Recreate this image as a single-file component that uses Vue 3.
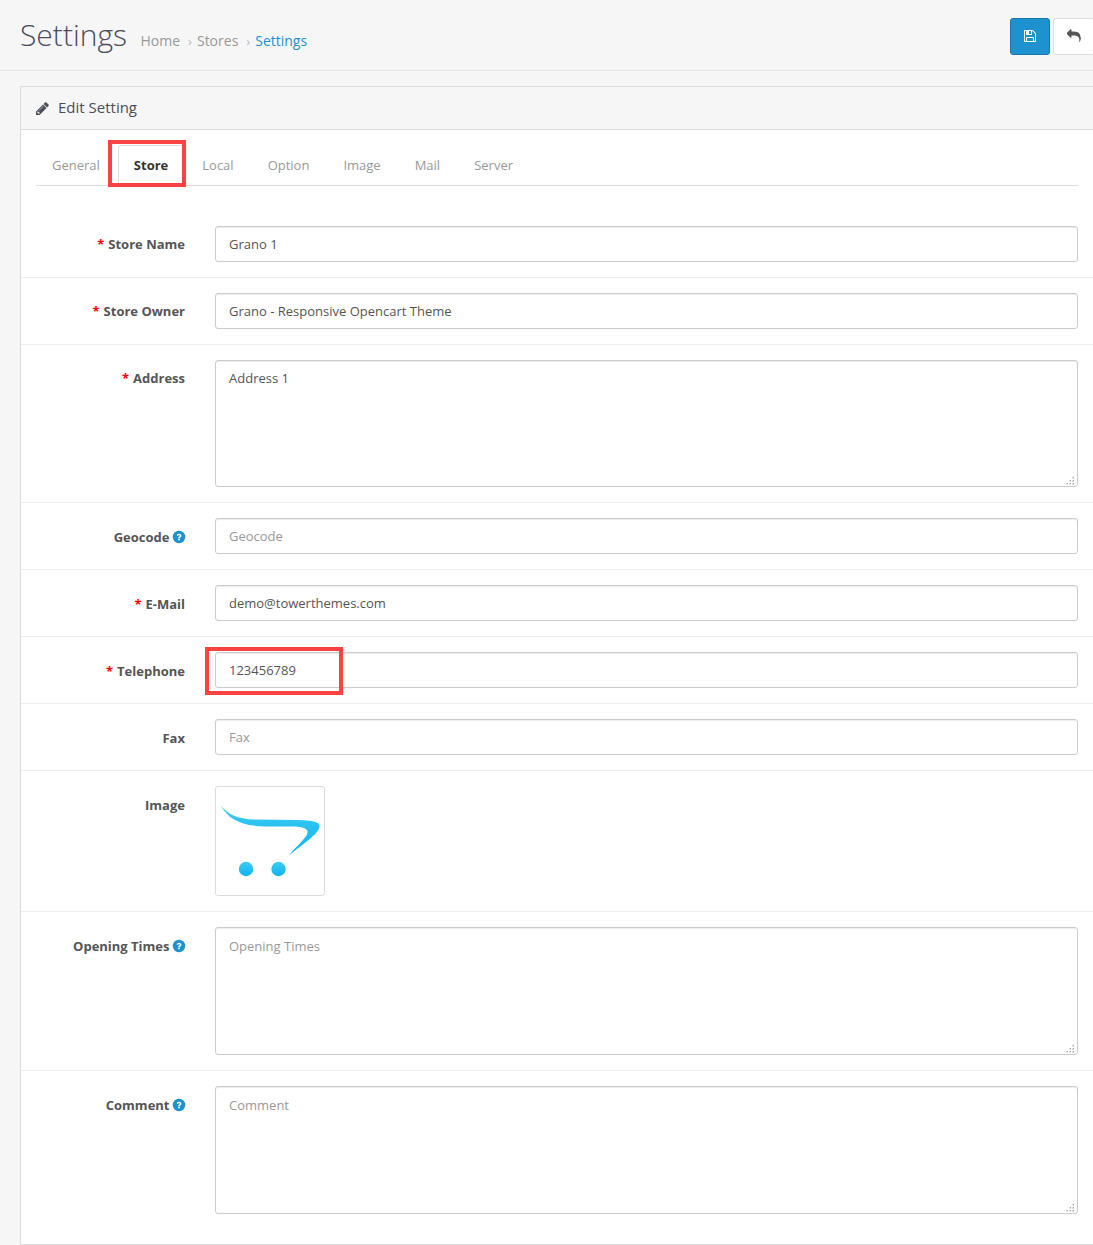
<script setup>
const tabs = ['General', 'Store', 'Local', 'Option', 'Image', 'Mail', 'Server']
const rows = [
  { label: 'Store Name', required: true, type: 'input', value: 'Grano 1' },
  { label: 'Store Owner', required: true, type: 'input', value: 'Grano - Responsive Opencart Theme' },
  { label: 'Address', required: true, type: 'textarea', value: 'Address 1', height: 127 },
  { label: 'Geocode', help: true, type: 'input', value: '', low: true },
  { label: 'E-Mail', required: true, type: 'input', value: 'demo@towerthemes.com', low: true },
  { label: 'Telephone', required: true, type: 'input', value: '123456789', marked: true, low: true },
  { label: 'Fax', type: 'input', value: '', low: true },
  { label: 'Image', type: 'image', low: true },
  { label: 'Opening Times', help: true, type: 'textarea', value: '', height: 128, low: true },
  { label: 'Comment', help: true, type: 'textarea', value: '', height: 128, low: true },
]
</script>

<template>
  <div class="page">
    <header class="page-header">
      <h1>Settings</h1>
      <nav class="breadcrumb">
        <a>Home</a><span class="sep">›</span><a>Stores</a><span class="sep">›</span><a class="current">Settings</a>
      </nav>
      <div class="actions">
        <button class="btn primary" aria-label="Save">
          <svg width="14" height="14" viewBox="0 0 1792 1792"><path transform="translate(128 0)" d="M384 1536h768v-384h-768v384zM1280 1536h128v-896q0-14-10-38.500t-20-34.500l-281-281q-10-10-34-20t-39-10v416q0 40-28 68t-68 28h-576q-40 0-68-28t-28-68v-416h-128v1280h128v-416q0-40 28-68t68-28h832q40 0 68 28t28 68v416zM896 608v-320q0-13-9.500-22.500t-22.500-9.500h-192q-13 0-22.500 9.500t-9.500 22.500v320q0 13 9.500 22.500t22.500 9.500h192q13 0 22.500-9.500t9.500-22.500zM1536 640v928q0 40-28 68t-68 28h-1344q-40 0-68-28t-28-68v-1344q0-40 28-68t68-28h928q40 0 88 20t76 48l280 280q28 28 48 76t20 88z" /></svg>
        </button>
        <button class="btn back" aria-label="Back">
          <svg width="14" height="14" viewBox="0 0 1792 1792"><path d="M1792 1120q0 166-127 451-3 7-10.500 24t-13.500 30-13 22q-12 17-28 17-15 0-23.500-10t-8.500-25q0-9 2.500-26.500t2.500-23.500q5-68 5-123 0-112-19.500-200.500t-54-153.500-89-112-117-78-146.500-47.500-168.500-24.500-192-7h-224v256q0 26-19 45t-45 19-45-19l-512-512q-19-19-19-45t19-45l512-512q19-19 45-19t45 19 19 45v256h224q713 0 875 403 53 134 53 333z" /></svg>
        </button>
      </div>
    </header>

    <section class="panel">
      <div class="panel-heading">
        <svg width="15" height="15" viewBox="0 0 1792 1792"><path d="M491 1536l91-91-235-235-91 91v107h128v128h107zm523-928q0-22-22-22-10 0-17 7l-542 542q-7 7-7 17 0 22 22 22 10 0 17-7l542-542q7-7 7-17zm-54-192l416 416-832 832h-416v-416zm683 96q0 53-37 90l-166 166-416-416 166-165q36-38 90-38 53 0 91 38l235 234q37 39 37 91z" /></svg>
        <h3>Edit Setting</h3>
      </div>

      <ul class="tabs">
        <li v-for="tab in tabs" :key="tab" :class="{ active: tab === 'Store' }">
          {{ tab }}
          <span v-if="tab === 'Store'" class="mark"></span>
        </li>
      </ul>

      <form class="form">
        <div v-for="row in rows" :key="row.label" class="row" :class="{ low: row.low }">
          <label>
            <span v-if="row.required" class="star">*</span>{{ row.label }}
            <svg v-if="row.help" class="help" width="14" height="14" viewBox="0 0 1792 1792">
              <circle cx="896" cy="896" r="800" />
              <path class="glyph" transform="translate(170 145) scale(0.81 0.84)" d="M1024 1376v-192q0-14-9-23t-23-9h-192q-14 0-23 9t-9 23v192q0 14 9 23t23 9h192q14 0 23-9t9-23zm256-672q0-88-55.500-163t-138.500-116-170-41q-243 0-371 213-15 24 8 42l132 100q7 6 19 6 16 0 25-12 53-68 86-92 34-24 86-24 48 0 85.500 26t37.500 59q0 38-20 61t-68 45q-63 28-115.500 86.500t-52.500 125.500v36q0 14 9 23t23 9h192q14 0 23-9t9-23q0-19 21.500-49.500t54.500-49.500q32-18 49-28.500t46-35 44.500-48 28-60.500 12.500-81z" />
            </svg>
          </label>
          <div class="field">
            <input v-if="row.type === 'input'" type="text" :value="row.value" :placeholder="row.label" />
            <template v-else-if="row.type === 'textarea'">
              <textarea :value="row.value" :placeholder="row.label" :style="{ height: row.height + 'px' }"></textarea>
              <svg class="grip" width="8" height="8" viewBox="0 0 8 8"><path d="M6 0h2v2h-2zM3 3h2v2h-2zM6 3h2v2h-2zM0 6h2v2h-2zM3 6h2v2h-2zM6 6h2v2h-2z" /><path class="dot" d="M7 0h1v1h-1zM4 3h1v1h-1zM7 3h1v1h-1zM1 6h1v1h-1zM4 6h1v1h-1zM7 6h1v1h-1z" /></svg>
            </template>
            <div v-else class="thumb">
              <svg width="100" height="100" viewBox="0 0 100 100">
                <defs>
                  <linearGradient id="swoosh" x1="0" y1="0" x2="0" y2="1">
                    <stop offset="0" stop-color="#3fcbf2" />
                    <stop offset="1" stop-color="#0cb5f0" />
                  </linearGradient>
                </defs>
                <g fill="url(#swoosh)">
                  <path d="M0.300 14C7.500 23 17 28.200 34 28.500L78 29C91 29.200 99.500 30.500 99.500 35C99.500 42.500 84 52 69 64.500C75 56 87.500 47 87.500 41C87.500 37 81 35.800 72 35.600L46 35.400C20 35 8.500 28 0.300 14Z" />
                  <circle cx="26" cy="78" r="7.200" />
                  <circle cx="58.500" cy="78" r="7.200" />
                </g>
              </svg>
            </div>
            <span v-if="row.marked" class="mark"></span>
          </div>
        </div>
      </form>
    </section>
  </div>
</template>

<style>
body {
  margin: 0;
  background: #f6f6f6;
  overflow: hidden;
}
</style>

<style scoped>
.page {
  box-sizing: border-box;
  width: 1115px;
  height: 1245px;
  overflow: hidden;
  font: 13px/20px "Open Sans", sans-serif;
  color: #555;
  background: #f6f6f6;
}
.page-header {
  box-sizing: border-box;
  height: 71px;
  padding: 0 20px;
  border-bottom: 1px solid #e7e7e7;
  display: flex;
  align-items: flex-start;
}
h1 {
  margin: 15px 0 0;
  font-size: 30px;
  line-height: 40px;
  font-weight: 300;
  color: #4c4d5a;
}
.breadcrumb {
  margin: 31px 0 0 13.500px;
  font-size: 14px;
  color: #999;
  white-space: nowrap;
}
.breadcrumb .sep {
  color: #bbb;
  font-size: 13px;
  margin: 0 5px 0 8px;
}
.breadcrumb .current {
  color: #1e91cf;
}
.actions {
  margin: 18px 0 0 auto;
  display: flex;
  gap: 3px;
}
.btn {
  box-sizing: border-box;
  width: 40px;
  height: 37px;
  padding: 0 0 1px;
  display: flex;
  align-items: center;
  justify-content: center;
  border: 1px solid #ddd;
  border-radius: 3px;
  background: #fff;
  color: #555;
}
.btn.primary {
  background: #1e91cf;
  border-color: #1978ab;
  color: #fff;
}
.btn.back {
  width: 42px;
}
svg {
  fill: currentColor;
}
.panel {
  box-sizing: border-box;
  width: 1075px;
  height: 1159px;
  margin: 15px 0 0 20px;
  border: 1px solid #dcdcdc;
  background: #fff;
}
.panel-heading {
  height: 42px;
  padding: 0 14px;
  display: flex;
  align-items: center;
  border-bottom: 1px solid #dcdcdc;
  background: #f6f6f6;
  color: #4c4d5a;
}
h3 {
  margin: 0 0 2px 8px;
  font-size: 15px;
  font-weight: 400;
}
.tabs {
  list-style: none;
  margin: 15px 0 25px 15px;
  padding: 0;
  width: 1042px;
  height: 40px;
  display: flex;
  gap: 2px;
  border-bottom: 1px solid #ddd;
}
.tabs li {
  position: relative;
  height: 40px;
  padding: 9px 15px;
  box-sizing: border-box;
  border: 1px solid transparent;
  border-bottom: 0;
  color: #999;
}
.tabs .active {
  height: 41px;
  border-color: #ddd;
  border-radius: 3px 3px 0 0;
  background: #fff;
  color: #333;
  font-weight: 700;
}
.mark {
  position: absolute;
  box-sizing: border-box;
  border: 4px solid #fc4343;
}
.tabs .mark {
  left: -11px;
  top: -6px;
  width: 78px;
  height: 47px;
}
.field .mark {
  left: -10px;
  top: -5px;
  width: 138px;
  height: 48px;
}
.row {
  display: flex;
  padding: 15px 0;
  border-top: 1px solid #ededed;
}
.row:first-child {
  border-top: 0;
}
label {
  width: 164px;
  margin-right: 30px;
  padding-top: 8px;
  display: flex;
  justify-content: flex-end;
  font-weight: 700;
  white-space: nowrap;
}
.low label {
  padding-top: 9px;
}
.star {
  color: #f00;
  margin-right: 4px;
}
.help {
  margin: 3px -1px 0 2.500px;
  color: #1e91cf;
}
.help .glyph {
  fill: #fff;
}
.field {
  position: relative;
  width: 863px;
}
input,
textarea {
  display: block;
  box-sizing: border-box;
  width: 100%;
  padding: 7px 13px;
  margin: 0;
  border: 1px solid #ccc;
  border-radius: 3px;
  box-shadow: inset 0 1px 1px rgba(0, 0, 0, 0.075);
  background: #fff;
  color: #555;
  font: inherit;
  resize: none;
  outline: none;
}
input {
  height: 36px;
}
.low textarea {
  padding-top: 8px;
}
::placeholder {
  color: #999;
  opacity: 1;
}
.grip {
  position: absolute;
  right: 4px;
  bottom: 2px;
  color: #e0e0e0;
}
.grip .dot {
  fill: #a0a0a0;
}
.thumb {
  box-sizing: border-box;
  width: 110px;
  height: 110px;
  padding: 4px;
  border: 1px solid #ddd;
  border-radius: 3px;
}
.thumb svg {
  display: block;
}
</style>
